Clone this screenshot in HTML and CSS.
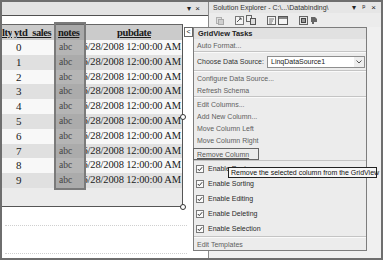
FILE: index.html
```html
<!DOCTYPE html>
<html lang="en">
<head>
  <meta charset="UTF-8">
  <title>GridView Tasks</title>
  <link rel="stylesheet" href="styles.css">
</head>
<body>

  <div class="screen">

    <div class="designer">
      <div class="tw-title"><span>&#9662;</span><span>&#215;</span></div>
      <div class="surface">
        <div class="gv">
          <div class="gv-row gv-head">
            <div class="c c-lty">lty</div>
            <div class="c c-ytd">ytd_sales</div>
            <div class="c c-notes">notes</div>
            <div class="c c-date">pubdate</div>
          </div>
          <div class="gv-row"><div class="c"></div><div class="c c-num">0</div><div class="c c-notes">abc</div><div class="c c-date">6/28/2008 12:00:00 AM</div></div>
          <div class="gv-row alt"><div class="c"></div><div class="c c-num">1</div><div class="c c-notes">abc</div><div class="c c-date">6/28/2008 12:00:00 AM</div></div>
          <div class="gv-row"><div class="c"></div><div class="c c-num">2</div><div class="c c-notes">abc</div><div class="c c-date">6/28/2008 12:00:00 AM</div></div>
          <div class="gv-row alt"><div class="c"></div><div class="c c-num">3</div><div class="c c-notes">abc</div><div class="c c-date">6/28/2008 12:00:00 AM</div></div>
          <div class="gv-row"><div class="c"></div><div class="c c-num">4</div><div class="c c-notes">abc</div><div class="c c-date">6/28/2008 12:00:00 AM</div></div>
          <div class="gv-row alt"><div class="c"></div><div class="c c-num">5</div><div class="c c-notes">abc</div><div class="c c-date">6/28/2008 12:00:00 AM</div></div>
          <div class="gv-row"><div class="c"></div><div class="c c-num">6</div><div class="c c-notes">abc</div><div class="c c-date">6/28/2008 12:00:00 AM</div></div>
          <div class="gv-row alt"><div class="c"></div><div class="c c-num">7</div><div class="c c-notes">abc</div><div class="c c-date">6/28/2008 12:00:00 AM</div></div>
          <div class="gv-row"><div class="c"></div><div class="c c-num">8</div><div class="c c-notes">abc</div><div class="c c-date">6/28/2008 12:00:00 AM</div></div>
          <div class="gv-row alt"><div class="c"></div><div class="c c-num">9</div><div class="c c-notes">abc</div><div class="c c-date">6/28/2008 12:00:00 AM</div></div>
          <div class="gv-foot"></div>

          <div class="col-sel"></div>
          <span class="handle h-mid"></span>
          <span class="handle h-end"></span>
        </div>
        <div class="guide g1"></div>
        <div class="guide g2"></div>
      </div>
    </div>

    <div class="explorer">
      <div class="se-title">
        <span>Solution Explorer - C:\...\Databinding\</span>
        <span class="se-btns"><span>&#9662;</span><span>&#7510;</span><span>&#215;</span></span>
      </div>
      <div class="se-tools">
        <svg class="ico" width="9" height="9" viewBox="0 0 9 9"><rect x="1.5" y="1.5" width="5" height="6" fill="#e0e0e0" stroke="#b0b0b0"/><rect x="3.5" y="3.5" width="5" height="5" fill="#d0d0d0" stroke="#a8a8a8"/></svg>
        <svg class="ico gap-l" width="9" height="9" viewBox="0 0 9 9"><rect x="0.5" y="0.5" width="8" height="8" fill="#f4f4f4" stroke="#777"/><path d="M2 6 L6 2 M4 2 H6 V4" fill="none" stroke="#555"/></svg>
        <svg class="ico" width="10" height="10" viewBox="0 0 10 10"><rect x="0.5" y="0.5" width="5" height="6" fill="#eee" stroke="#666"/><rect x="4.5" y="3.5" width="5" height="6" fill="#ddd" stroke="#555"/></svg>
        <svg class="ico gap-l" width="9" height="9" viewBox="0 0 9 9"><rect x="0.5" y="0.5" width="8" height="8" fill="#f4f4f4" stroke="#666"/><path d="M2 3 H7 M2 5 H6 M2 7 H5" stroke="#777"/></svg>
        <svg class="ico" width="10" height="9" viewBox="0 0 10 9"><rect x="0.5" y="0.5" width="9" height="8" fill="#f4f4f4" stroke="#555"/><rect x="1" y="1" width="8" height="2" fill="#888"/></svg>
        <svg class="ico gap-l" width="9" height="9" viewBox="0 0 9 9"><rect x="0.5" y="0.5" width="8" height="8" fill="#e6e6e6" stroke="#666"/><rect x="2.5" y="2.5" width="4" height="4" fill="#999" stroke="#444"/></svg>
        <svg class="ico" width="8" height="9" viewBox="0 0 8 9"><path d="M1 1 H5 L7 3 V6 H4 V8 H2 V6 H1 Z" fill="#666"/></svg>
      </div>
      <div class="se-body"></div>
    </div>

    <div class="smart-tag">&lt;</div>

    <div class="tasks">
      <div class="tasks-head">GridView Tasks</div>
      <div class="t-item">Auto Format...</div>
      <div class="t-sep"></div>
      <div class="t-item t-choose">
        <span>Choose Data Source:</span>
        <span class="dd">
          <span class="dd-val">LinqDataSource1</span>
          <span class="dd-btn"><svg width="6" height="4" viewBox="0 0 6 4"><path d="M0.5 0.5 L3 3 L5.5 0.5" fill="none" stroke="#555"/></svg></span>
        </span>
      </div>
      <div class="t-sep"></div>
      <div class="t-item">Configure Data Source...</div>
      <div class="t-item">Refresh Schema</div>
      <div class="t-sep"></div>
      <div class="t-item">Edit Columns...</div>
      <div class="t-item">Add New Column...</div>
      <div class="t-item">Move Column Left</div>
      <div class="t-item">Move Column Right</div>
      <div class="t-item t-remove"><u>Remove Column</u></div>
      <div class="t-sep thin"></div>
      <div class="t-check"><span class="cb"><svg width="6" height="6" viewBox="0 0 6 6"><path d="M0.8 3 L2.3 4.6 L5.2 1.2" fill="none" stroke="#333" stroke-width="1"/></svg></span>Enable Paging</div>
      <div class="t-check"><span class="cb"><svg width="6" height="6" viewBox="0 0 6 6"><path d="M0.8 3 L2.3 4.6 L5.2 1.2" fill="none" stroke="#333" stroke-width="1"/></svg></span>Enable Sorting</div>
      <div class="t-check"><span class="cb"><svg width="6" height="6" viewBox="0 0 6 6"><path d="M0.8 3 L2.3 4.6 L5.2 1.2" fill="none" stroke="#333" stroke-width="1"/></svg></span>Enable Editing</div>
      <div class="t-check"><span class="cb"><svg width="6" height="6" viewBox="0 0 6 6"><path d="M0.8 3 L2.3 4.6 L5.2 1.2" fill="none" stroke="#333" stroke-width="1"/></svg></span>Enable Deleting</div>
      <div class="t-check"><span class="cb"><svg width="6" height="6" viewBox="0 0 6 6"><path d="M0.8 3 L2.3 4.6 L5.2 1.2" fill="none" stroke="#333" stroke-width="1"/></svg></span>Enable Selection</div>
      <div class="t-sep"></div>
      <div class="t-item">Edit Templates</div>
    </div>

    <div class="tip">Remove the selected column from the GridView</div>

  </div>

</body>
</html>
```

FILE: styles.css
```css
* {
  box-sizing: border-box;
}

body {
  margin: 0;
  background: #fff;
  font-family: "Liberation Sans", Arial, sans-serif;
}

.screen {
  position: relative;
  display: flex;
  width: 383px;
  height: 260px;
  border: 2px solid #6e6e6e;
  background: #fff;
  overflow: hidden;
}

/* left tool window: the page designer */
.designer {
  width: 206px;
  display: flex;
  flex-direction: column;
}

.tw-title {
  height: 14px;
  background: #e3e3e3;
  border-bottom: 1px solid #505050;
  display: flex;
  justify-content: flex-end;
  align-items: center;
  gap: 4px;
  padding-right: 8px;
  font-size: 8px;
  color: #222;
}

.surface {
  flex: 1;
  padding-top: 8px;
}

.gv {
  position: relative;
  width: 181px;
  border-top: 1px solid #666;
  border-right: 1px solid #555;
  border-bottom: 1px solid #555;
  font-family: "Liberation Serif", "Times New Roman", serif;
  color: #1a1a1a;
}

.gv-row {
  display: grid;
  grid-template-columns: 10px 42px 32px 96px;
  height: 14.8px;
  line-height: 14.8px;
  font-size: 10.5px;
  letter-spacing: -0.15px;
  background: #f8f8f8;
}

.gv-row.alt {
  background: #e0e0e0;
}

.gv-head {
  height: 15px;
  line-height: 15px;
  background: #cbcbcb;
  font-weight: bold;
  font-size: 10.5px;
  letter-spacing: -0.4px;
  text-decoration: underline;
}

.c {
  white-space: nowrap;
  overflow: hidden;
}

.gv-head .c-ytd {
  padding-left: 2px;
}

.c-num {
  padding-left: 4px;
  font-size: 11px;
}

.c-notes {
  background: #b5b5b5;
  font-size: 9.5px;
  color: #444;
  padding-left: 5px;
  letter-spacing: 0;
}

.gv-row.alt .c-notes {
  background: #ababab;
}

.gv-head .c-notes {
  background: #a9a9a9;
  font-size: 10.5px;
  color: #1a1a1a;
  padding-left: 4px;
  letter-spacing: -0.4px;
}

.c-date {
  text-indent: -3.5px;
}

.gv-head .c-date {
  text-align: center;
  text-indent: 0;
}

.gv-foot {
  height: 18px;
  background: #ebebeb;
}

.col-sel {
  position: absolute;
  left: 52px;
  top: -3px;
  width: 32px;
  height: 168px;
  border: 2px solid #7a7a7a;
}

.handle {
  position: absolute;
  right: -4px;
  width: 6px;
  height: 6px;
  border: 1px solid #333;
  border-radius: 50%;
  background: #fff;
}

.h-mid {
  top: 89px;
}

.h-end {
  bottom: -4px;
}

.guide {
  width: 182px;
  margin-left: 3px;
  border-top: 1px dotted #cfcfcf;
}

.g1 {
  margin-top: 18px;
}

.g2 {
  margin-top: 27px;
}

/* right tool window: solution explorer */
.explorer {
  flex: 1;
  border-left: 1px solid #8a8a8a;
  display: flex;
  flex-direction: column;
}

.se-title {
  height: 11px;
  background: #e6e6e6;
  display: flex;
  align-items: center;
  padding: 0 5px 0 4px;
  font-size: 7px;
  color: #333;
  white-space: nowrap;
}

.se-btns {
  margin-left: auto;
  display: flex;
  gap: 6px;
  font-size: 8px;
  color: #222;
}

.se-tools {
  height: 14px;
  background: #ececec;
  display: flex;
  align-items: center;
  gap: 2px;
  padding-left: 6px;
}

.ico {
  display: block;
}

.gap-l {
  margin-left: 9px;
}

.se-body {
  flex: 1;
  background: #f0f0f0;
}

/* smart tag + task panel */
.smart-tag {
  position: absolute;
  left: 182px;
  top: 25px;
  width: 9px;
  height: 10px;
  border: 1px solid #666;
  background: #fff;
  font-size: 7px;
  line-height: 8px;
  text-align: center;
  color: #222;
}

.tasks {
  position: absolute;
  left: 191px;
  top: 25px;
  width: 174px;
  height: 224px;
  border: 1px solid #7d7d7d;
  background: #ececec;
  display: flex;
  flex-direction: column;
  font-size: 7px;
  color: #5e5e5e;
}

.tasks-head {
  height: 11px;
  display: flex;
  align-items: center;
  padding-left: 4px;
  background: #e1e1e1;
  font-weight: bold;
  font-size: 7.4px;
  color: #222;
}

.t-item {
  height: 12px;
  display: flex;
  align-items: center;
  padding-left: 3px;
  white-space: nowrap;
}

.t-sep {
  height: 2px;
  border-top: 1px solid #c4c4c4;
  border-bottom: 1px solid #fafafa;
}

.t-sep.thin {
  height: 1px;
  border-bottom: 0;
}

.t-choose {
  height: 17px;
  color: #333;
}

.dd {
  margin-left: auto;
  margin-right: 1px;
  width: 98px;
  height: 12px;
  display: flex;
  align-items: center;
  background: #fff;
  border: 1px solid #8e8e8e;
  color: #222;
}

.dd-val {
  flex: 1;
  padding-left: 3px;
}

.dd-btn {
  width: 10px;
  height: 10px;
  display: flex;
  align-items: center;
  justify-content: center;
  background: #eee;
}

.t-remove {
  margin-top: 2px;
  margin-left: -1px;
  width: 66px;
  padding-left: 3px;
  border: 1px solid #666;
  color: #555;
}

.t-check {
  height: 15px;
  display: flex;
  align-items: center;
  gap: 4px;
  padding-left: 2px;
  color: #2a2a2a;
  white-space: nowrap;
}

.cb {
  width: 8px;
  height: 8px;
  border: 1px solid #7a7a7a;
  background: #fafafa;
  display: flex;
  align-items: center;
  justify-content: center;
}

.tip {
  position: absolute;
  left: 226px;
  top: 165px;
  width: 149px;
  height: 11px;
  padding: 0 2px;
  border: 1px solid #222;
  background: #f6f6f6;
  font-size: 7px;
  line-height: 9px;
  color: #111;
  white-space: nowrap;
}
```
